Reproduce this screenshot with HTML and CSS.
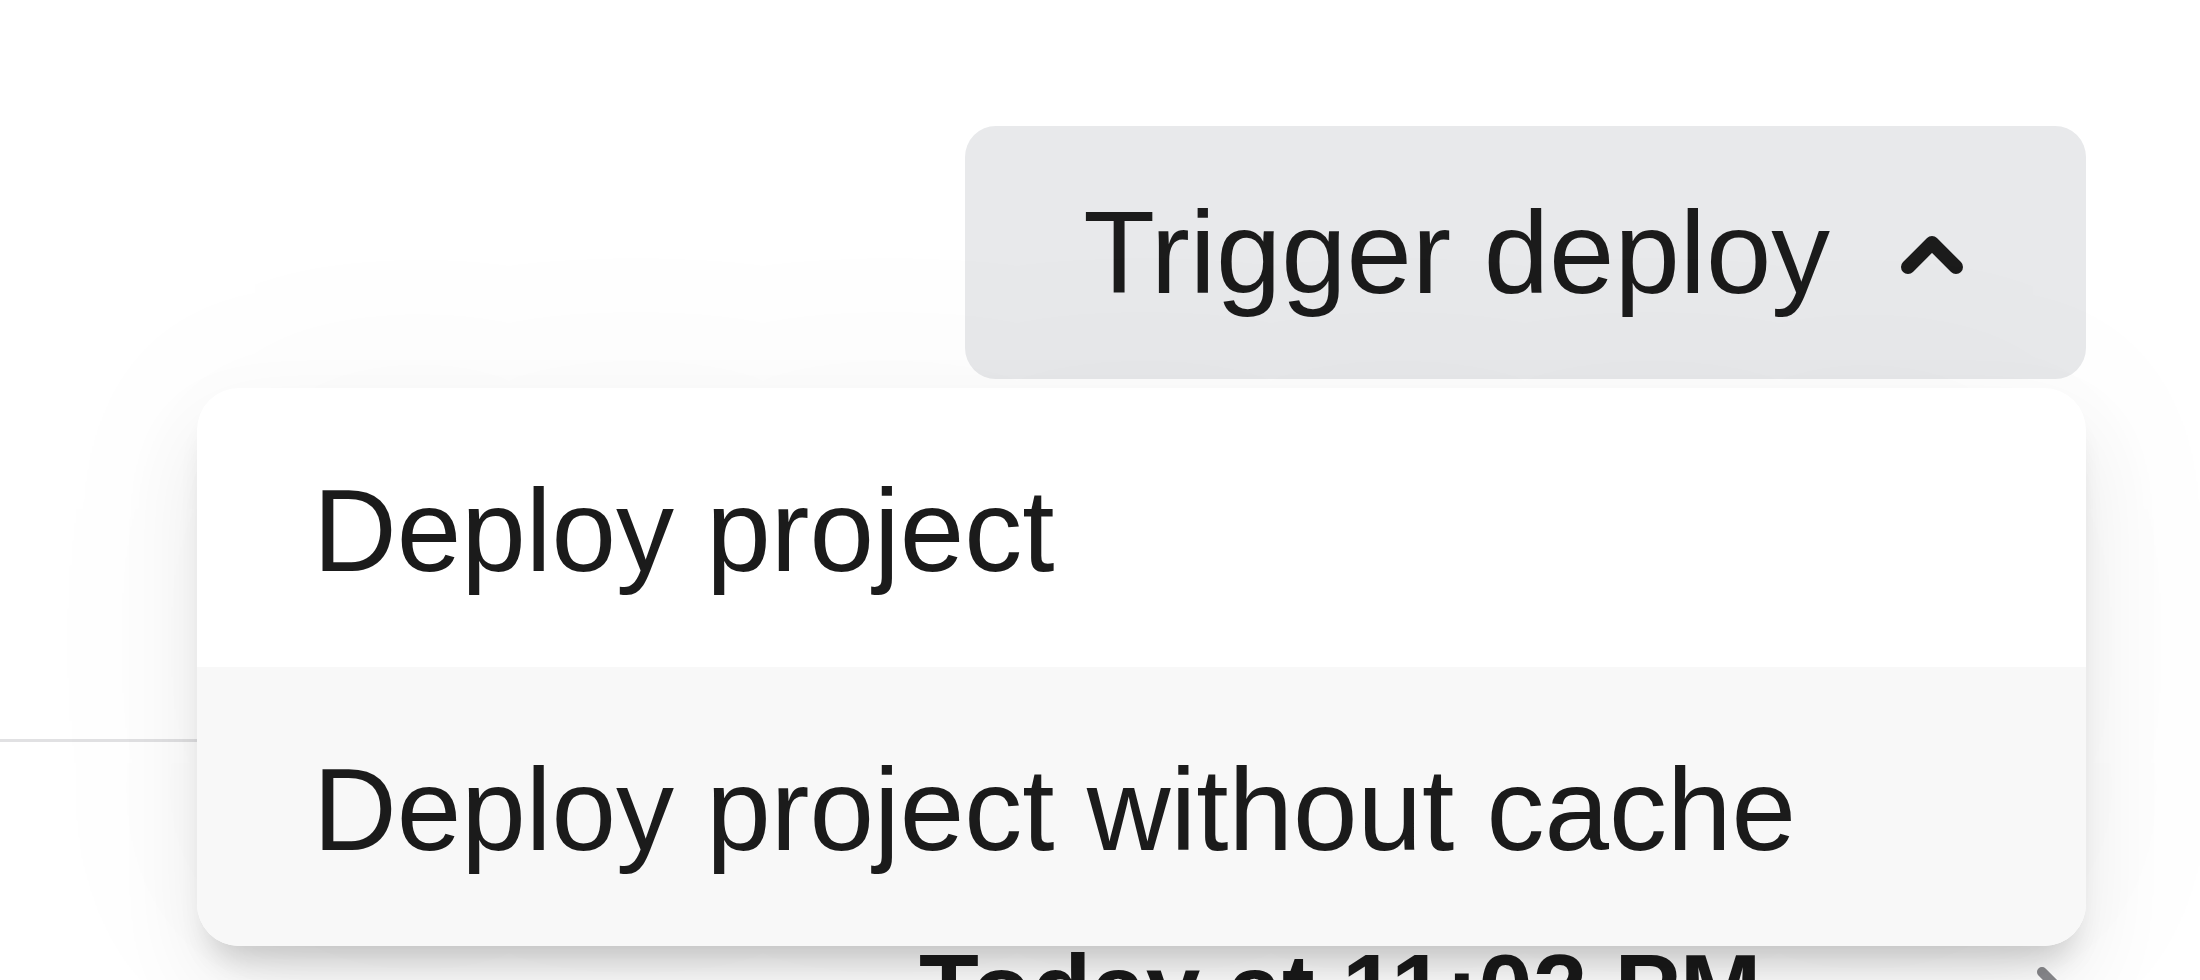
FILE: index.html
```html
<!DOCTYPE html>
<html lang="en">
<head>
<meta charset="utf-8">
<title>Trigger deploy</title>
<link rel="stylesheet" href="styles.css">
</head>
<body>
<div class="page">
  <div class="toolbar">
    <div class="deploy">
      <button class="deploy-btn" type="button">
        <span class="deploy-label">Trigger deploy</span>
        <svg class="caret" width="64" height="44" viewBox="0 0 64 44" aria-hidden="true">
          <path d="M8 36 L32 12 L56 36" fill="none" stroke="#1b1b1b" stroke-width="14" stroke-linecap="round" stroke-linejoin="round"/>
        </svg>
      </button>
      <div class="menu" role="menu">
        <div class="menu-item" role="menuitem">Deploy project</div>
        <div class="menu-item is-hover" role="menuitem">Deploy project without cache</div>
      </div>
    </div>
  </div>
  <div class="list">
    <div class="row">
      <span class="row-date">Today at 11:02 PM</span>
      <svg class="row-chevron" width="40" height="64" viewBox="0 0 40 64" aria-hidden="true">
        <path d="M8 8 L32 32 L8 56" fill="none" stroke="#8a8a8e" stroke-width="10" stroke-linecap="round" stroke-linejoin="round"/>
      </svg>
    </div>
  </div>
</div>
</body>
</html>
```
FILE: styles.css
```css
html, body {
  margin: 0;
  padding: 0;
  background: #ffffff;
  overflow: hidden;
}

body {
  width: 2200px;
  height: 980px;
  font-family: "Liberation Sans", Arial, sans-serif;
  color: #1b1b1b;
}

.page {
  display: flex;
  flex-direction: column;
}

.toolbar {
  display: flex;
  justify-content: flex-end;
  padding: 126px 114px 0 0;
}

.deploy {
  position: relative;
}

.deploy-btn {
  display: flex;
  align-items: center;
  gap: 70px;
  height: 253px;
  padding: 0 122px 0 118px;
  border: none;
  border-radius: 31px;
  background: #e8e9eb;
  font-family: inherit;
  font-size: 117.5px;
  color: #1b1b1b;
}

.deploy-label {
  line-height: 1;
}

.caret {
  display: block;
  flex: none;
}

.menu {
  position: absolute;
  top: 262px;
  right: 0;
  width: 1889px;
  border-radius: 42px;
  background: #ffffff;
  overflow: hidden;
  z-index: 2;
  box-shadow:
    0 0 220px rgba(0, 0, 0, 0.035),
    0 40px 90px -10px rgba(0, 0, 0, 0.10),
    0 26px 30px -14px rgba(0, 0, 0, 0.16);
}

.menu-item {
  display: flex;
  align-items: center;
  height: 279px;
  padding: 6px 120px 0 116px;
  box-sizing: border-box;
  font-size: 116px;
  color: #1b1b1b;
  white-space: nowrap;
}

.menu-item.is-hover {
  background: #f8f8f8;
}

.list {
  margin: 360px 114px 0 0;
  border-top: 3px solid #e1e1e3;
}

.row {
  display: flex;
  align-items: flex-start;
  padding: 198px 0 0 919px;
}

.row-date {
  font-size: 98px;
  font-weight: 700;
  line-height: 1;
  color: #1b1b1b;
}

.row-chevron {
  display: block;
  margin-left: auto;
  margin-right: 12px;
  margin-top: 24px;
}
```
